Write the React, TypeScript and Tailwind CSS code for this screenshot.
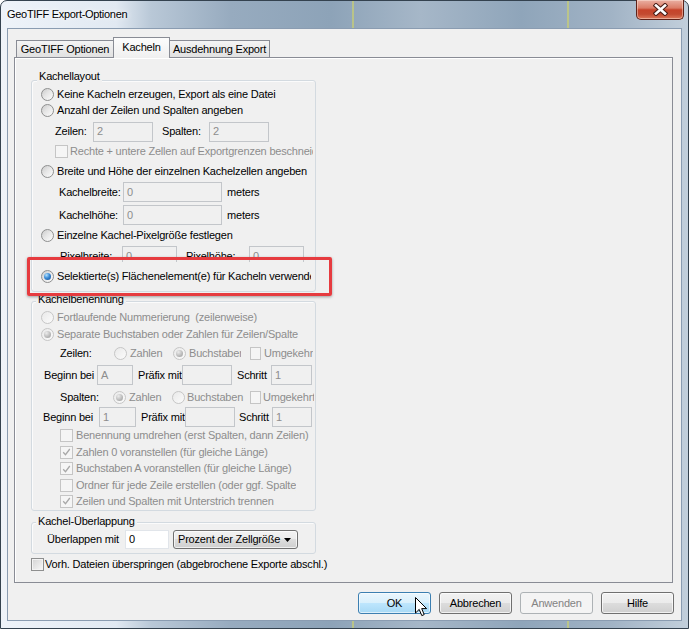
import React from "react";

type Kids = { children?: React.ReactNode };

function Radio({ checked = false, disabled = false }: { checked?: boolean; disabled?: boolean }) {
  const ring = disabled
    ? "border-[#c6c6c6] bg-[linear-gradient(135deg,#e9e9e9,#fbfbfb)]"
    : "border-[#8e8f8f] bg-[linear-gradient(135deg,#cbcbcb_0%,#e6e6e6_45%,#fdfdfd_100%)]";
  const dot = disabled
    ? "bg-[radial-gradient(circle_at_35%_30%,#ececec_0%,#b8b8b8_60%,#9c9c9c_100%)]"
    : "bg-[radial-gradient(circle_at_35%_30%,#b3e2ff_0%,#3b8bd6_45%,#114a8e_100%)]";
  return (
    <span className={`flex h-[13px] w-[13px] shrink-0 items-center justify-center rounded-full border ${ring}`}>
      {checked ? <span className={`h-[7px] w-[7px] rounded-full ${dot}`} /> : null}
    </span>
  );
}

function Check({ checked = false, disabled = false, narrow = false }: { checked?: boolean; disabled?: boolean; narrow?: boolean }) {
  const box = disabled
    ? "border-[#c5c5c5] bg-[#f5f5f5]"
    : "border-[#8e8f8f] bg-[linear-gradient(135deg,#d3d3d3,#f8f8f8)] shadow-[inset_0_0_0_1px_#f3f3f3]";
  return (
    <span className={`flex h-[13px] ${narrow ? "w-[11px]" : "w-[13px]"} shrink-0 items-center justify-center border ${box}`}>
      {checked ? (
        <svg width="9" height="8" viewBox="0 0 9 8">
          <path d="M1.2 4.3 L3.5 6.7 L7.8 1" fill="none" stroke={disabled ? "#a8a8a8" : "#2c2c2c"} strokeWidth="1.3" />
        </svg>
      ) : null}
    </span>
  );
}

function Field({ width, value = "", enabled = false, height = "h-[20px]" }: { width: string; value?: string; enabled?: boolean; height?: string }) {
  const look = enabled
    ? "border-[#e1e5ea] bg-white text-black"
    : "border-[#c3c6ca] bg-[#f0f0f0] text-[#8d8d8d]";
  return (
    <span className={`flex ${width} ${height} shrink-0 items-center border pl-[3px] ${look}`}>{value}</span>
  );
}

function Dim({ children }: Kids) {
  return <span className="text-[#8d8d8d]">{children}</span>;
}

function Group({ label, labelPos, className, children }: { label: string; labelPos: string; className: string } & Kids) {
  return (
    <div className={`relative rounded-[3px] border border-[#d3dae0] shadow-[inset_1px_1px_0_#fbfbfb] ${className}`}>
      <span className={`absolute bg-[#f0f0f0] px-[2px] leading-[13px] ${labelPos}`}>{label}</span>
      {children}
    </div>
  );
}

function Button({ children, kind = "normal" }: { kind?: "normal" | "focus" | "disabled" } & Kids) {
  const look =
    kind === "focus"
      ? "border-[#3c7fb1] bg-[linear-gradient(180deg,#eaf6fd_0%,#d9f0fc_50%,#bee6fd_50%,#a7d9f5_100%)] text-black shadow-[inset_0_0_0_1px_rgba(255,255,255,0.6)]"
      : kind === "disabled"
        ? "border-[#adb2b5] bg-[#f4f4f4] text-[#838383]"
        : "border-[#707070] bg-[linear-gradient(180deg,#f2f2f2_0%,#ebebeb_50%,#dddddd_50%,#cfcfcf_100%)] text-black shadow-[inset_0_0_0_1px_rgba(255,255,255,0.7)]";
  return (
    <div className={`flex h-[22px] w-[73px] items-center justify-center rounded-[3px] border ${look}`}>{children}</div>
  );
}

function TitleClose() {
  return (
    <div className="mr-[4px] mt-[-1px] flex h-[20px] w-[48px] items-center justify-center rounded-b-[5px] border border-t-0 border-[#5e2219] bg-[linear-gradient(180deg,#eab0a2_0%,#db7c66_42%,#c6432a_52%,#c34a30_75%,#de7a5c_100%)] shadow-[inset_0_0_0_1px_rgba(255,235,225,0.45)]">
      <svg width="15" height="13" viewBox="0 0 15 13">
        <path d="M3 2.5 L12 10.5 M12 2.5 L3 10.5" stroke="#4a1d16" strokeWidth="4.6" strokeLinecap="square" />
        <path d="M3 2.5 L12 10.5 M12 2.5 L3 10.5" stroke="#ffffff" strokeWidth="2.6" strokeLinecap="square" />
      </svg>
    </div>
  );
}

function Cursor() {
  return (
    <svg width="13" height="20" viewBox="0 0 13 20" className="absolute left-[414px] top-[596px]">
      <path d="M0.5 0.5 L0.5 16 L4.2 12.4 L6.8 18.6 L9.2 17.6 L6.7 11.6 L11.6 11.6 Z" fill="#ffffff" stroke="#000000" strokeWidth="1" strokeLinejoin="miter" />
    </svg>
  );
}

export default function App() {
  return (
    <div className="relative h-[629px] w-[689px] overflow-hidden bg-white font-['Liberation_Sans',Arial,sans-serif] text-[11px] leading-[13px] tracking-[-0.2px] text-black">
      <div className="relative flex h-[629px] w-[689px] flex-col rounded-t-[7px] border border-[#34424f] bg-[linear-gradient(90deg,transparent_351px,rgba(198,205,120,0.75)_351px,rgba(198,205,120,0.75)_353px,transparent_353px,transparent_566px,rgba(198,205,120,0.75)_566px,rgba(198,205,120,0.75)_568px,transparent_568px),linear-gradient(90deg,#eef3f9_0px,#e1e9f2_115px,#b9c8d7_150px,#97abbf_230px,#8da3b8_330px,#a6b7c8_420px,#8fa5ba_520px,#a1b3c5_610px,#c3d0dc_689px)]">
        {/* title bar */}
        <div className="flex h-[27px] shrink-0 items-start justify-between">
          <span className="self-center pb-[1px] pl-[6px] text-[11px] tracking-[-0.3px] [text-shadow:0_0_7px_#ffffff,0_0_3px_#ffffff]">
            GeoTIFF Export-Optionen
          </span>
          <TitleClose />
        </div>

        {/* client area */}
        <div className="mx-[6px] flex h-[593px] shrink-0 flex-col border border-[#8a9cb1] bg-[#f0f0f0]">
          {/* tabs */}
          <div className="ml-[8px] mt-[8px] flex h-[20px] items-end">
            <div className="flex h-[17px] w-[98px] items-center justify-center border border-b-0 border-[#898c95] bg-[linear-gradient(180deg,#f4f4f4,#e1e1e1)]">
              GeoTIFF Optionen
            </div>
            <div className="relative z-10 -mb-px -ml-px flex h-[21px] w-[57px] items-center justify-center border border-b-0 border-[#898c95] bg-[linear-gradient(180deg,#fcfcfc,#f0f0f0)] pb-[2px]">
              Kacheln
            </div>
            <div className="flex h-[17px] w-[100px] items-center justify-center border border-b-0 border-l-0 border-[#898c95] bg-[linear-gradient(180deg,#f4f4f4,#e1e1e1)]">
              Ausdehnung Export
            </div>
          </div>

          {/* tab page */}
          <div className="ml-[6px] flex h-[526px] w-[659px] shrink-0 flex-col items-start border border-[#898c95] bg-[#f0f0f0] shadow-[inset_1px_1px_0_#ffffff]">
            {/* Kachellayout */}
            <Group label="Kachellayout" labelPos="-top-[11px] left-[5px]" className="ml-[16px] mt-[22px] h-[212px] w-[285px]">
              <div className="flex flex-col pt-[5px]">
                <div className="flex h-[16px] items-center pl-[9px]">
                  <Radio />
                  <span className="ml-[3px]">Keine Kacheln erzeugen, Export als eine Datei</span>
                </div>
                <div className="flex h-[16px] items-center pl-[9px]">
                  <Radio />
                  <span className="ml-[3px]">Anzahl der Zeilen und Spalten angeben</span>
                </div>
                <div className="mt-[3px] flex h-[21px] items-center pl-[23px]">
                  <span className="w-[38px]">Zeilen:</span>
                  <Field width="w-[60px]" value="2" />
                  <span className="ml-[9px] w-[47px]">Spalten:</span>
                  <Field width="w-[60px]" value="2" />
                </div>
                <div className="flex h-[19px] w-[281px] items-center overflow-hidden whitespace-nowrap pl-[23px]">
                  <Check disabled />
                  <span className="ml-[2px]">
                    <Dim>Rechte + untere Zellen auf Exportgrenzen beschneiden</Dim>
                  </span>
                </div>
                <div className="flex h-[20px] items-center pl-[9px]">
                  <Radio />
                  <span className="ml-[3px]">Breite und Höhe der einzelnen Kachelzellen angeben</span>
                </div>
                <div className="flex h-[22px] items-center pl-[27px]">
                  <span className="w-[64px]">Kachelbreite:</span>
                  <Field width="w-[99px]" value="0" />
                  <span className="ml-[5px]">meters</span>
                </div>
                <div className="mt-[1px] flex h-[22px] items-center pl-[27px]">
                  <span className="w-[64px]">Kachelhöhe:</span>
                  <Field width="w-[99px]" value="0" />
                  <span className="ml-[5px]">meters</span>
                </div>
                <div className="flex h-[18px] items-center pl-[9px]">
                  <Radio />
                  <span className="ml-[3px]">Einzelne Kachel-Pixelgröße festlegen</span>
                </div>
                <div className="flex h-[18px] items-start overflow-hidden pl-[28px]">
                  <div className="mt-[2px] flex h-[20px] shrink-0 items-center">
                    <span className="w-[62px]">Pixelbreite:</span>
                    <Field width="w-[55px]" value="0" />
                    <span className="ml-[9px] w-[63px]">Pixelhöhe:</span>
                    <Field width="w-[55px]" value="0" />
                  </div>
                </div>
                <div className="flex h-[29px] w-[279px] items-center overflow-hidden whitespace-nowrap pl-[9px]">
                  <Radio checked />
                  <span className="ml-[3px]">Selektierte(s) Flächenelement(e) für Kacheln verwenden</span>
                </div>
              </div>
            </Group>

            {/* Kachelbenennung */}
            <Group label="Kachelbenennung" labelPos="-top-[9px] left-[4px]" className="ml-[16px] mt-[9px] h-[210px] w-[285px]">
              <div className="flex flex-col pt-[7px]">
                <div className="flex h-[17px] items-center pl-[9px]">
                  <Radio disabled />
                  <span className="ml-[3px] whitespace-pre">
                    <Dim>Fortlaufende Nummerierung  (zeilenweise)</Dim>
                  </span>
                </div>
                <div className="flex h-[17px] items-center pl-[9px]">
                  <Radio disabled checked />
                  <span className="ml-[3px]">
                    <Dim>Separate Buchstaben oder Zahlen für Zeilen/Spalte</Dim>
                  </span>
                </div>
                <div className="flex h-[20px] items-center whitespace-nowrap pl-[28px]">
                  <span className="w-[54px]">Zeilen:</span>
                  <Radio disabled />
                  <span className="ml-[3px] w-[43px]">
                    <Dim>Zahlen</Dim>
                  </span>
                  <Radio disabled checked />
                  <span className="ml-[3px] w-[52px] overflow-hidden">
                    <Dim>Buchstaben</Dim>
                  </span>
                  <span className="ml-[9px]">
                    <Check disabled narrow />
                  </span>
                  <span className="ml-[3px] w-[49px] overflow-hidden">
                    <Dim>Umgekehrt</Dim>
                  </span>
                </div>
                <div className="flex h-[24px] items-center whitespace-nowrap pl-[12px]">
                  <span className="w-[53px]">Beginn bei</span>
                  <Field width="w-[36px]" value="A" />
                  <span className="ml-[5px] w-[44px]">Präfix mit</span>
                  <Field width="w-[50px]" />
                  <span className="ml-[5px] w-[34px]">Schritt</span>
                  <Field width="w-[41px]" value="1" />
                </div>
                <div className="flex h-[20px] items-center whitespace-nowrap pl-[28px]">
                  <span className="w-[53px]">Spalten:</span>
                  <Radio disabled checked />
                  <span className="ml-[3px] w-[43px]">
                    <Dim>Zahlen</Dim>
                  </span>
                  <Radio disabled />
                  <span className="ml-[2px] w-[57px] overflow-hidden">
                    <Dim>Buchstaben</Dim>
                  </span>
                  <span className="ml-[6px]">
                    <Check disabled narrow />
                  </span>
                  <span className="ml-[2px] w-[51px] overflow-hidden">
                    <Dim>Umgekehrt</Dim>
                  </span>
                </div>
                <div className="flex h-[20px] items-center whitespace-nowrap pl-[11px]">
                  <span className="w-[56px]">Beginn bei</span>
                  <Field width="w-[37px]" value="1" />
                  <span className="ml-[5px] w-[44px]">Präfix mit</span>
                  <Field width="w-[50px]" />
                  <span className="ml-[4px] w-[33px]">Schritt</span>
                  <Field width="w-[40px]" value="1" />
                </div>
                <div className="flex h-[17px] w-[281px] items-center overflow-hidden whitespace-nowrap pl-[28px]">
                  <Check disabled />
                  <span className="ml-[3px]">
                    <Dim>Benennung umdrehen (erst Spalten, dann Zeilen)</Dim>
                  </span>
                </div>
                <div className="flex h-[16px] w-[281px] items-center overflow-hidden whitespace-nowrap pl-[28px]">
                  <Check disabled checked />
                  <span className="ml-[3px]">
                    <Dim>Zahlen 0 voranstellen (für gleiche Länge)</Dim>
                  </span>
                </div>
                <div className="flex h-[17px] w-[281px] items-center overflow-hidden whitespace-nowrap pl-[28px]">
                  <Check disabled checked />
                  <span className="ml-[3px]">
                    <Dim>Buchstaben A voranstellen (für gleiche Länge)</Dim>
                  </span>
                </div>
                <div className="flex h-[17px] w-[264px] items-center overflow-hidden whitespace-nowrap pl-[28px]">
                  <Check disabled />
                  <span className="ml-[3px]">
                    <Dim>Ordner für jede Zeile erstellen (oder ggf. Spalte)</Dim>
                  </span>
                </div>
                <div className="flex h-[14px] w-[281px] items-center overflow-hidden whitespace-nowrap pl-[28px]">
                  <Check disabled checked />
                  <span className="ml-[3px]">
                    <Dim>Zeilen und Spalten mit Unterstrich trennen</Dim>
                  </span>
                </div>
              </div>
            </Group>

            {/* Kachel-Überlappung */}
            <Group label="Kachel-Überlappung" labelPos="-top-[8px] left-[4px]" className="ml-[16px] mt-[11px] h-[32px] w-[285px]">
              <div className="flex h-[21px] items-center pl-[15px] mt-[6px] whitespace-nowrap">
                <span className="w-[78px]">Überlappen mit</span>
                <Field width="w-[44px]" height="h-[19px]" value="0" enabled />
                <div className="ml-[4px] flex h-[19px] w-[125px] items-center justify-between rounded-[3px] border border-[#707070] bg-[linear-gradient(180deg,#f2f2f2_0%,#ebebeb_50%,#dddddd_50%,#cfcfcf_100%)] pl-[4px] pr-[6px] shadow-[inset_0_0_0_1px_rgba(255,255,255,0.7)]">
                  <span>Prozent der Zellgröße</span>
                  <svg width="7" height="4" viewBox="0 0 7 4">
                    <path d="M0 0 L7 0 L3.5 4 Z" fill="#000000" />
                  </svg>
                </div>
              </div>
            </Group>

            <div className="ml-[16px] mt-[2px] flex h-[16px] items-center whitespace-nowrap">
              <Check />
              <span className="ml-[1px]">Vorh. Dateien überspringen (abgebrochene Exporte abschl.)</span>
            </div>
          </div>

          {/* dialog buttons */}
          <div className="mt-[9px] flex justify-end gap-[8px] pr-[7px]">
            <Button kind="focus">OK</Button>
            <Button>Abbrechen</Button>
            <Button kind="disabled">Anwenden</Button>
            <Button>Hilfe</Button>
          </div>
        </div>

        {/* highlight marker around the selected option */}
        <div className="pointer-events-none absolute left-[26px] top-[256px] h-[39px] w-[305px] rounded-[2px] border-[3px] border-[#e63b3f] shadow-[0_1px_3px_rgba(0,0,0,0.35)]" />
        <Cursor />
      </div>
    </div>
  );
}
